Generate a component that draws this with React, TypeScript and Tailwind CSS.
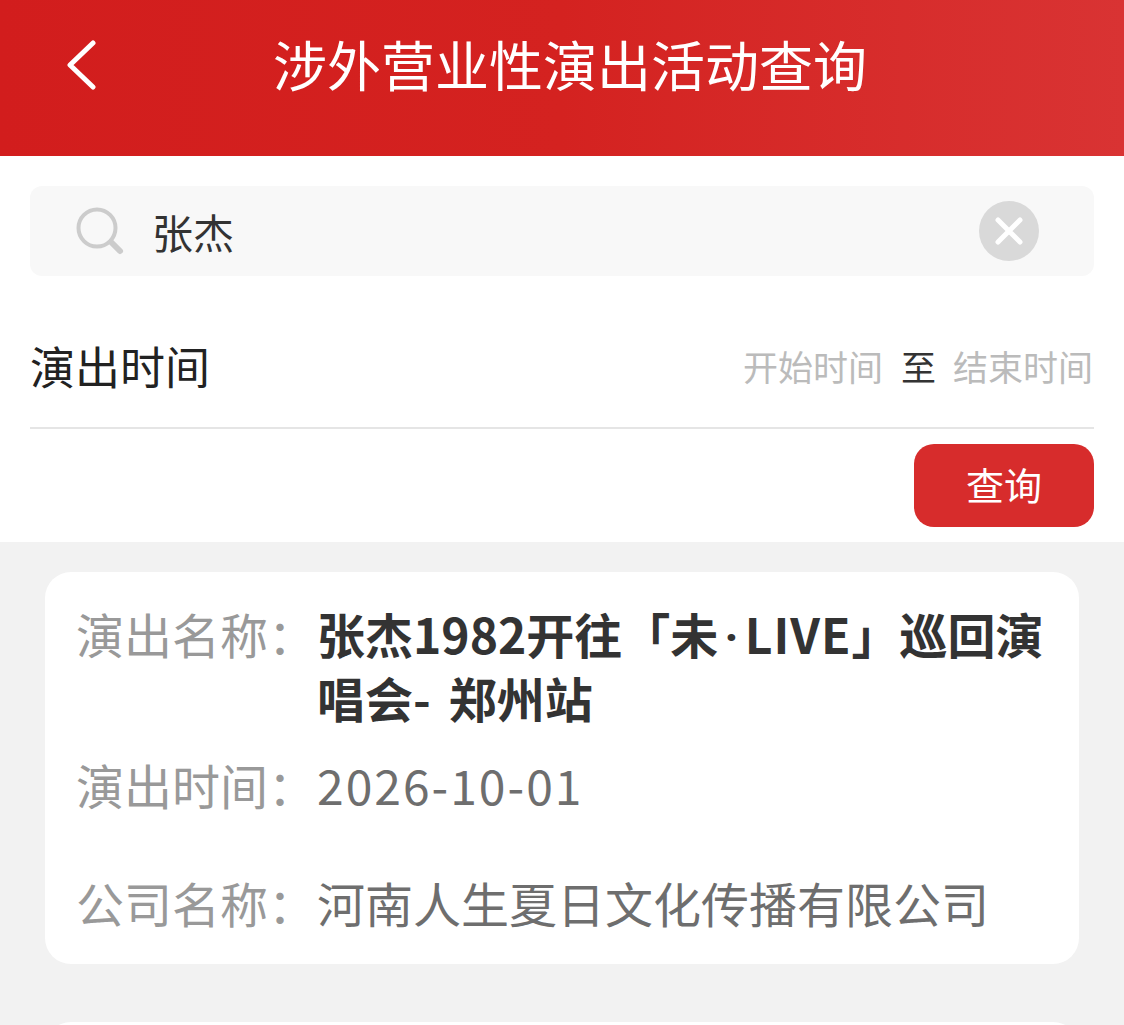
const FONT_STACK = "font-['Noto_Sans_CJK_SC','Noto_Sans',sans-serif]";

function InfoRow({ label, children, className = '' }: { label: string; children: React.ReactNode; className?: string }) {
  return (
    <div className={`flex ${className}`}>
      <span className="w-[241px] shrink-0 text-[#999999]">{label}</span>
      <div className="min-w-0 flex-1">{children}</div>
    </div>
  );
}

export default function App() {
  return (
    <div className={`relative h-[1025px] w-[1124px] overflow-hidden bg-[#f2f2f2] ${FONT_STACK}`}>
      <header className="relative flex h-[156px] items-center justify-center bg-gradient-to-r from-[#d21d1d] via-[#d42220] via-50% to-[#d93333] pb-[29px] pl-[16px] text-white">
        <svg className="absolute left-[66px] top-[40px]" width="32" height="50" viewBox="0 0 32 50" fill="none">
          <path d="M27 3 L4 25 L27 47" stroke="#ffffff" strokeWidth="5" strokeLinecap="round" strokeLinejoin="round" />
        </svg>
        <h1 className="text-[54px] font-normal leading-none">涉外营业性演出活动查询</h1>
      </header>

      <section className="h-[386px] bg-white px-[30px] pt-[30px]">
        <div className="flex h-[90px] items-center rounded-[12px] bg-[#f8f8f8] pl-[45px] pr-[55px]">
          <svg width="50" height="50" viewBox="0 0 50 50" fill="none" className="shrink-0">
            <circle cx="22" cy="22" r="18.5" stroke="#cccccc" strokeWidth="4" />
            <path d="M36 36 L45 45" stroke="#cccccc" strokeWidth="6" strokeLinecap="round" />
          </svg>
          <span className="ml-[27px] flex-1 text-[41px] leading-none text-[#333333]">张杰</span>
          <div className="flex h-[60px] w-[60px] items-center justify-center rounded-full bg-[#d9d9d9]">
            <svg width="30" height="30" viewBox="0 0 30 30" fill="none">
              <path d="M4 4 L26 26 M26 4 L4 26" stroke="#ffffff" strokeWidth="5" strokeLinecap="round" />
            </svg>
          </div>
        </div>

        <div className="flex h-[153px] items-center justify-between border-b-2 border-[#e5e5e5] pt-[27px]">
          <span className="text-[45px] leading-none text-[#222222]">演出时间</span>
          <div className="flex items-center pr-[1px] text-[35px] leading-none text-[#bbbbbb]">
            <span>开始时间</span>
            <span className="ml-[18px] mr-[17px] text-[#333333]">至</span>
            <span>结束时间</span>
          </div>
        </div>

        <div className="mt-[15px] flex justify-end">
          <button className="h-[83px] w-[180px] rounded-[20px] bg-[#d72c2c] pb-[4px] text-[38px] leading-none text-white">查询</button>
        </div>
      </section>

      <article className="mx-[45px] mt-[30px] h-[392px] rounded-[26px] bg-white pl-[31px] pr-[30px] pt-[29px] text-[48px] leading-[65px] text-[#6e6e6e]">
        <InfoRow label="演出名称：">
          <p className="font-bold leading-[64px] text-[#333333]">
            张杰1982开往「未
            <span className="px-[6px] font-['Roboto',sans-serif] leading-[0]">·</span>
            <span className="tracking-[1px]">LIVE</span>」巡回演唱会<span className="mr-[7px]">-</span> 郑州站
          </p>
        </InfoRow>
        <InfoRow label="演出时间：" className="mt-[23px]">
          <span className="tracking-[2px]">2026-10-01</span>
        </InfoRow>
        <InfoRow label="公司名称：" className="mt-[53px]">河南人生夏日文化传播有限公司</InfoRow>
      </article>

      <div className="mx-[45px] mt-[58px] h-[40px] rounded-t-[26px] bg-white" />
    </div>
  );
}
